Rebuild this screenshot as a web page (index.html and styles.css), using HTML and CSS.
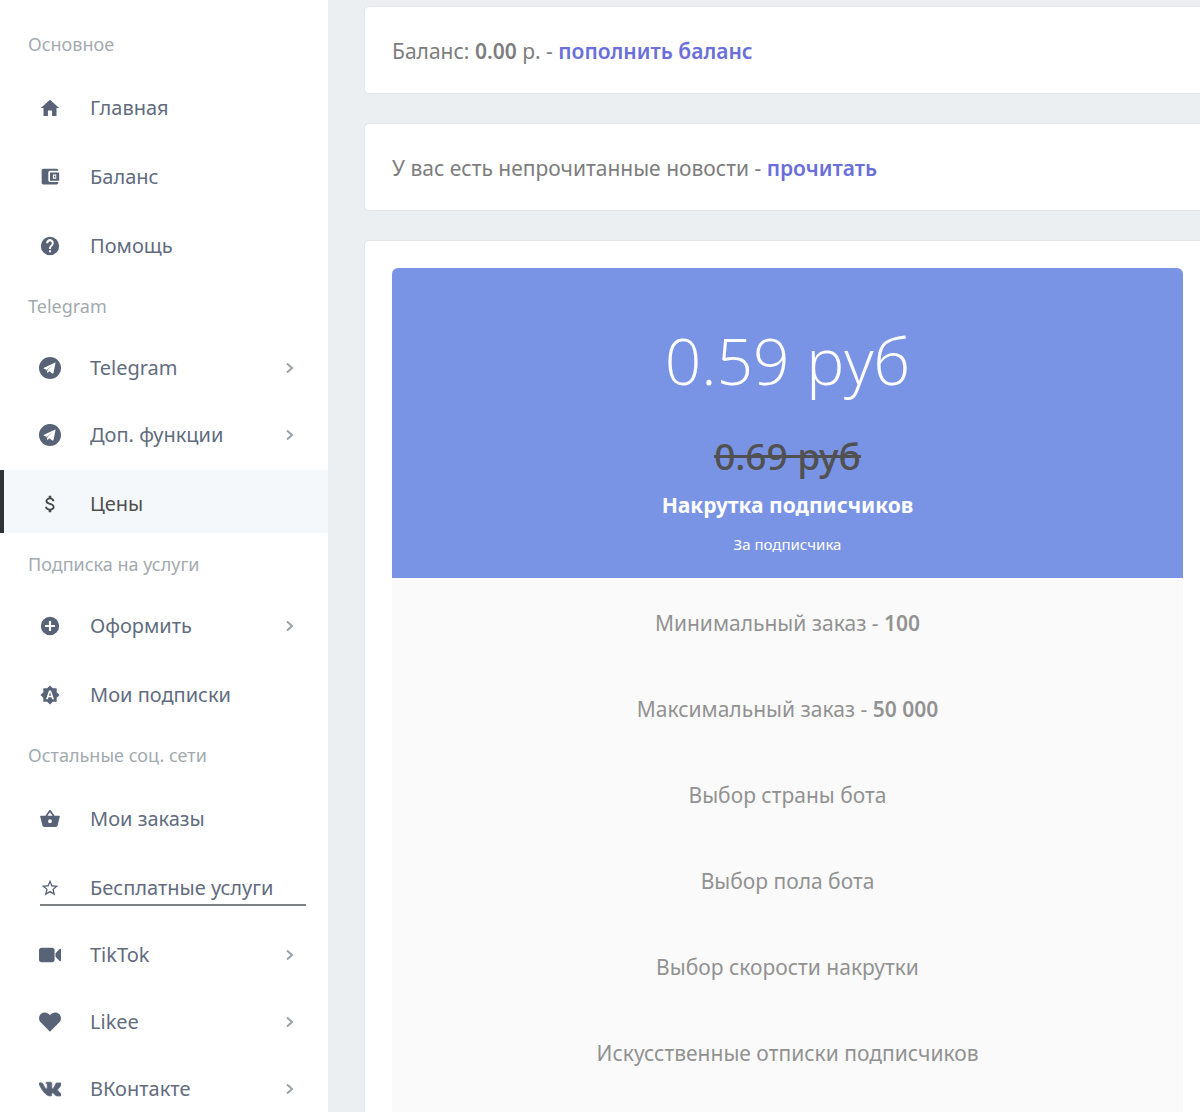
FILE: index.html
```html
<!DOCTYPE html>
<html lang="ru">
<head>
<meta charset="utf-8">
<meta name="viewport" content="width=device-width, initial-scale=1">
<title>Цены</title>
<link rel="stylesheet" href="styles.css">
</head>
<body>
<div class="layout">
  <nav class="sidebar">
    <h2 class="sidebar-title">Основное</h2>
    <ul class="menu">
      <li class="item"><a class="link" href="#"><svg class="icon" viewBox="0 0 24 24"><path d="M9.500 21.500v-6.500h5v6.500h5.300V12H23L12 2 1 12h3.200v9.500z"/></svg><span>Главная</span></a></li>
      <li class="item"><a class="link" href="#"><svg class="icon" viewBox="0 0 24 24"><path fill-rule="evenodd" d="M22 18v1a2 2 0 0 1-2 2H4a2 2 0 0 1-2-2V4a2 2 0 0 1 2-2h16a2 2 0 0 1 2 2v.500H12a2 2 0 0 0-2 2v9.500a2 2 0 0 0 2 2zM12 6.500h11v10H12zm3.500 2.500v5h4V9z"/><path d="M16.800 10.400h1.600v2.200h-1.600z"/></svg><span>Баланс</span></a></li>
      <li class="item"><a class="link" href="#"><svg class="icon" viewBox="0 0 24 24"><path d="M12 1a11 11 0 1 0 0 22 11 11 0 0 0 0-22zm1.200 18.500h-2.400v-2.400h2.400zm2.400-8.400-1.100 1.100c-.9.900-1.300 1.600-1.300 3.300h-2.400v-.6c0-1.300.5-2.400 1.300-3.300l1.500-1.500a2.200 2.200 0 1 0-3.800-1.500H7.400a4.600 4.600 0 1 1 8.200 2.500z"/></svg><span>Помощь</span></a></li>
    </ul>
    <h2 class="sidebar-title">Telegram</h2>
    <ul class="menu">
      <li class="item group"><a class="link" href="#"><svg class="icon large" viewBox="0 0 24 24"><path fill-rule="evenodd" d="M12 0a12 12 0 1 0 0 24 12 12 0 0 0 0-24zm6 6.600-2.200 10.800c-.1.700-.6.900-1.200.6l-3.300-2.500-1.700 1.700c-.2.200-.5.200-.6 0l-.7-3.400-2.800-.9c-.7-.2-.7-.7.100-1.100l11.500-5.600c.6-.3 1-.1.900.4zM8.900 13.500l.5 2.200.3-2 5.700-5.200z"/></svg><span>Telegram</span><svg class="chevron" viewBox="0 0 10 12"><path d="M2 1.500 7 6l-5 4.500"/></svg></a></li>
      <li class="item group"><a class="link" href="#"><svg class="icon large" viewBox="0 0 24 24"><path fill-rule="evenodd" d="M12 0a12 12 0 1 0 0 24 12 12 0 0 0 0-24zm6 6.600-2.200 10.800c-.1.700-.6.900-1.200.6l-3.300-2.500-1.700 1.700c-.2.200-.5.200-.6 0l-.7-3.400-2.800-.9c-.7-.2-.7-.7.100-1.100l11.500-5.600c.6-.3 1-.1.900.4zM8.900 13.500l.5 2.200.3-2 5.700-5.200z"/></svg><span>Доп. функции</span><svg class="chevron" viewBox="0 0 10 12"><path d="M2 1.500 7 6l-5 4.500"/></svg></a></li>
      <li class="item active"><a class="link" href="#" aria-current="page"><svg class="icon" viewBox="0 0 24 24"><path d="M12.300 10.700c-2.500-.6-3.300-1.200-3.300-2.300 0-1.200 1.100-2.100 3-2.100s2.700 1 2.800 2.400h2.400c-.1-1.900-1.200-3.700-3.600-4.200V2h-3.200v2.400C8.300 4.900 6.600 6.300 6.600 8.500c0 2.500 2.100 3.800 5.200 4.500 2.800.6 3.400 1.600 3.400 2.600 0 .8-.6 2-3.200 2-2.400 0-3.400-1.100-3.500-2.400H6.100c.1 2.500 2 4 4.300 4.400V22h3.200v-2.400c2.100-.4 3.900-1.600 3.900-4 0-3-2.700-4.200-5.200-4.900z"/></svg><span>Цены</span></a></li>
    </ul>
    <h2 class="sidebar-title">Подписка на услуги</h2>
    <ul class="menu">
      <li class="item group"><a class="link" href="#"><svg class="icon" viewBox="0 0 24 24"><path fill-rule="evenodd" d="M12 1a11 11 0 1 0 0 22 11 11 0 0 0 0-22zm-1.300 5h2.600v4.700H18v2.600h-4.700V18h-2.600v-4.700H6v-2.600h4.700z"/></svg><span>Оформить</span><svg class="chevron" viewBox="0 0 10 12"><path d="M2 1.500 7 6l-5 4.500"/></svg></a></li>
      <li class="item"><a class="link" href="#"><svg class="icon" viewBox="0 0 24 24"><path fill-rule="evenodd" d="M12 .5 15.400 4H20v4.600l3.500 3.400-3.500 3.400V20h-4.600L12 23.500 8.600 20H4v-4.600L.5 12 4 8.600V4h4.600zM10.800 6.500 7.200 17h2.200l.8-2.400h3.600l.8 2.400h2.200L13.200 6.500zm-.1 6.500L12 9l1.300 4z"/></svg><span>Мои подписки</span></a></li>
    </ul>
    <h2 class="sidebar-title">Остальные соц. сети</h2>
    <ul class="menu">
      <li class="item"><a class="link" href="#"><svg class="icon" viewBox="0 0 24 24"><path fill-rule="evenodd" d="M17.500 8 12.900 1.500a1 1 0 0 0-1.800 0L6.500 8H1.300c-.8 0-1.200.5-1 1.200l2.700 10.900c.3 1 1 1.400 1.800 1.400h14.400c.9 0 1.600-.5 1.800-1.400l2.700-10.900c.2-.7-.2-1.200-1-1.200zM8.900 8 12 3.800 15.100 8zM12 17a2.300 2.300 0 1 1 0-4.600 2.300 2.300 0 0 1 0 4.600z"/></svg><span>Мои заказы</span></a></li>
      <li class="item underlined"><a class="link" href="#"><svg class="icon" viewBox="0 0 24 24"><path fill-rule="evenodd" d="m22 9.200-7.200-.6L12 2 9.200 8.600 2 9.200l5.500 4.700L5.800 21l6.200-3.700 6.200 3.700-1.700-7.100zM12 15.400l-3.800 2.300 1-4.300-3.300-2.900 4.400-.4L12 6.100l1.700 4 4.400.4-3.300 2.900 1 4.300z"/></svg><span>Бесплатные услуги</span></a></li>
      <li class="item group"><a class="link" href="#"><svg class="icon large" viewBox="0 0 24 24"><path d="M3 4h11a3 3 0 0 1 3 3v10a3 3 0 0 1-3 3H3a3 3 0 0 1-3-3V7a3 3 0 0 1 3-3zM18 10l4.500-4.500c.7-.6 1.500-.3 1.500.5v12c0 .8-.8 1.100-1.500.5L18 14z"/></svg><span>TikTok</span><svg class="chevron" viewBox="0 0 10 12"><path d="M2 1.500 7 6l-5 4.500"/></svg></a></li>
      <li class="item group"><a class="link" href="#"><svg class="icon large" viewBox="0 0 24 24"><path d="M12 22.500 1.800 12.200C-.8 9.500-.4 5 2.400 2.900 5.300.8 9.500 1.400 12 4.700c2.500-3.300 6.700-3.900 9.600-1.800 2.800 2.100 3.200 6.600.6 9.300z"/></svg><span>Likee</span><svg class="chevron" viewBox="0 0 10 12"><path d="M2 1.500 7 6l-5 4.500"/></svg></a></li>
      <li class="item group"><a class="link" href="#"><svg class="icon large" viewBox="0 0 24 24"><path d="M11.500 19.500h1.400s.5 0 .7-.3c.2-.2.200-.700.200-.7s0-2.100.9-2.400c1-.3 2.200 2 3.500 2.900 1 .7 1.700.5 1.700.5l3.400 0s1.800-.1 1-1.600c-.1-.1-.5-1-2.500-2.900-2.200-2-1.900-1.700.7-5.200 1.600-2.100 2.200-3.400 2-3.900-.2-.6-1.300-.4-1.300-.4h-3.900s-.3 0-.5.100-.3.400-.3.400-.6 1.600-1.400 3c-1.700 2.900-2.400 3.100-2.700 2.900-.7-.400-.5-1.700-.5-2.700 0-2.900.4-4.100-.9-4.400-.4-.1-.7-.2-1.800-.2-1.400 0-2.600 0-3.200.3-.4.200-.8.700-.6.700.3 0 .9.200 1.200.6.400.6.400 1.800.4 1.800s.2 3.500-.6 3.900c-.5.300-1.300-.3-2.900-3-.8-1.400-1.400-2.900-1.400-2.900s-.1-.3-.3-.4c-.3-.2-.6-.2-.6-.2H.7S.2 5.400 0 5.600c-.2.200 0 .6 0 .6s2.900 6.800 6.200 10.200c3 3.100 5.300 3.100 5.300 3.100z" stroke="currentColor"/></svg><span>ВКонтакте</span><svg class="chevron" viewBox="0 0 10 12"><path d="M2 1.500 7 6l-5 4.500"/></svg></a></li>
    </ul>
  </nav>
  <main class="content">
    <section class="card">
      <p class="note">Баланс: <b>0.00</b> р. - <a class="action" href="#">пополнить баланс</a></p>
    </section>
    <section class="card">
      <p class="note">У вас есть непрочитанные новости - <a class="action" href="#">прочитать</a></p>
    </section>
    <section class="card plans">
      <article class="plan">
        <header class="plan-head">
          <p class="price">0.59 руб</p>
          <del class="old-price">0.69 руб</del>
          <h1 class="plan-name">Накрутка подписчиков</h1>
          <p class="unit">За подписчика</p>
        </header>
        <ul class="features">
          <li>Минимальный заказ - <b>100</b></li>
          <li>Максимальный заказ - <b>50 000</b></li>
          <li>Выбор страны бота</li>
          <li>Выбор пола бота</li>
          <li>Выбор скорости накрутки</li>
          <li>Искусственные отписки подписчиков</li>
        </ul>
      </article>
    </section>
  </main>
</div>
</body>
</html>
```
FILE: styles.css
```css
* {
  box-sizing: border-box;
}

body {
  margin: 0;
  background: #ebeff2;
  color: #7d7d7d;
  font-family: "Noto Sans", "Open Sans", sans-serif;
  font-size: 20px;
  line-height: 32px;
}

h1, h2, p, ul {
  margin: 0;
  padding: 0;
}

ul {
  list-style: none;
}

a {
  color: inherit;
  text-decoration: none;
}

b {
  font-weight: 600;
}

.layout {
  display: flex;
  min-height: 100vh;
}

/* Sidebar */
.sidebar {
  flex: none;
  width: 328px;
  padding-top: 28px;
  background: #fff;
  color: #626c7e;
}

.sidebar-title {
  padding-left: 28px;
  color: #a3aab0;
  font-size: 18px;
  font-weight: 400;
  line-height: 32px;
}

.menu {
  padding: 12px 0 11px;
}

.item {
  padding: 2px 0 4px;
}

.item.group {
  padding-top: 0;
}

.link {
  display: flex;
  align-items: center;
  height: 63px;
  padding: 4px 33px 0 36px;
  border-left: 4px solid transparent;
}

.active .link {
  border-left-color: #2f3338;
  background: #f5f8fb;
  color: #505050;
}

.underlined .link {
  background: linear-gradient(#7b7f82, #7b7f82) 36px 50px / 266px 2px no-repeat;
}

.icon {
  flex: none;
  width: 20px;
  height: 20px;
  margin: 0 30px 0 0;
  fill: #586377;
}

.active .icon {
  fill: #484848;
}

.icon.large {
  width: 22px;
  height: 22px;
  margin: 0 29px 0 -1px;
}

.chevron {
  width: 10px;
  height: 12px;
  margin-left: auto;
  fill: none;
  stroke: #98a2ab;
  stroke-width: 2;
}

/* Content */
.content {
  flex: 1;
  display: flex;
  flex-direction: column;
  gap: 29px;
  min-width: 0;
  padding: 6px 0 0 36px;
  font-size: 21px;
}

.card {
  padding: 28px 17px 26px 27px;
  border: 1px solid #e3e6e9;
  border-right: 0;
  border-radius: 5px 0 0 5px;
  background: #fff;
}

.action {
  color: #6a6fdb;
  font-weight: 600;
}

.plans {
  flex: 1;
  padding-top: 27px;
  padding-bottom: 0;
}

.plan {
  min-height: 100%;
  background: #fafafa;
  text-align: center;
}

.plan-head {
  padding: 48px 20px 16px;
  border-radius: 6px 6px 0 0;
  background: #7a94e5;
  color: #fff;
}

.price {
  font-family: "Open Sans", "Noto Sans", sans-serif;
  font-size: 64px;
  font-weight: 300;
  line-height: 90px;
}

.old-price {
  display: block;
  padding-top: 22px;
  color: #515151;
  font-size: 37px;
  font-weight: 500;
  line-height: 56px;
}

.plan-name {
  font-size: 21px;
  font-weight: 700;
  line-height: 42px;
}

.unit {
  font-size: 15px;
  font-weight: 400;
  line-height: 36px;
}

.features {
  padding-top: 2px;
  color: #929292;
}

.features li {
  padding: 27px 20px;
}
```
